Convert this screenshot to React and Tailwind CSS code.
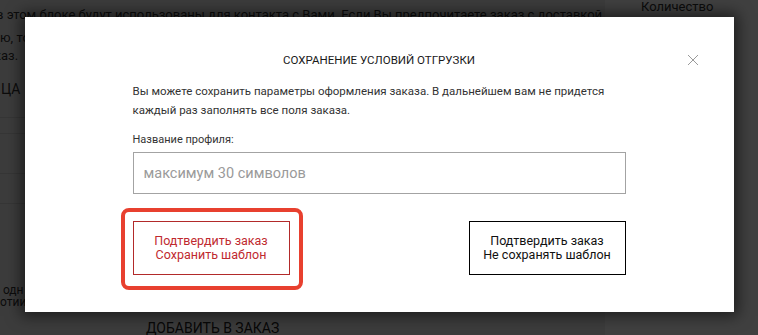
import React from 'react';

const PageBehind = () => (
    <div className="flex h-full w-full">
        <div className="flex w-[605px] flex-col bg-[#efefef] text-[13px] text-[#333]">
            <div className="h-[117px] pt-[6px] leading-[18px]">
                <p className="-ml-[4px] whitespace-nowrap">в этом блоке будут использованы для контакта с Вами. Если Вы предпочитаете заказ с доставкой через</p>
                <p className="mt-[5px] whitespace-nowrap">ю, то укажите это в комментарии.</p>
                <p className="-ml-[6px] whitespace-nowrap">каз.</p>
                <p className="ml-[1px] mt-[15px] text-[14px] whitespace-nowrap">ЦА</p>
            </div>
            <div className="h-[16px] border-t border-[#d6d6d6]" />
            <div className="h-[40px] border-t border-[#d6d6d6]" />
            <div className="h-[30px] border-t border-[#d6d6d6]" />
            <div className="flex-1 border-t border-[#d6d6d6] pt-[80px] text-[12px] leading-[12px]">
                <p className="-ml-[3px] whitespace-nowrap">ı одн</p>
                <p className="whitespace-nowrap">отии</p>
                <p className="ml-[146px] mt-[14px] text-[14px] text-[#222]">ДОБАВИТЬ В ЗАКАЗ</p>
            </div>
        </div>
        <div className="flex-1 bg-white pl-[36px] pt-[1px] text-[13px] leading-[12px] text-[#333]">
            <p>Количество</p>
        </div>
    </div>
);

const SaveTermsModal = () => (
    <div className="relative h-[295px] w-[709px] bg-white px-[108px] pt-[35px] shadow-[0_0_14px_4px_rgba(0,0,0,0.55)]">
        <button className="absolute right-[35px] top-[37px] flex h-[12px] w-[12px] items-center justify-center">
            <svg width="12" height="12" viewBox="0 0 12 12" fill="none" stroke="#9a9a9a" strokeWidth="1">
                <path d="M1 1L11 11M11 1L1 11" />
            </svg>
        </button>
        <h2 className="text-center text-[11.5px] leading-[16px] text-[#1a1a1a]">СОХРАНЕНИЕ УСЛОВИЙ ОТГРУЗКИ</h2>
        <p className="mt-[14px] text-[11.5px] leading-[19px] text-[#333]">
            Вы можете сохранить параметры оформления заказа. В дальнейшем вам не придется каждый раз заполнять все поля заказа.
        </p>
        <label className="mt-[12px] block text-[11px] leading-[16px] text-[#333]">Название профиля:</label>
        <input
            className="mt-[4px] block h-[42px] w-full border border-[#a3a3a3] px-[10px] text-[14.5px] text-[#333] outline-none placeholder:text-[#9a9a9a]"
            placeholder="максимум 30 символов"
        />
        <div className="mt-[27px] flex justify-between">
            <div className="relative">
                <div className="absolute -bottom-[15px] -left-[12px] -right-[13px] -top-[13px] rounded-[8px] border-[4px] border-[#e8402f]" />
                <button className="relative flex h-[54px] w-[157px] flex-col items-center justify-center border border-[#b22a2a] text-[12.5px] leading-[14px] text-[#bf2a2f]">
                    <span>Подтвердить заказ</span>
                    <span>Сохранить шаблон</span>
                </button>
            </div>
            <button className="flex h-[54px] w-[157px] flex-col items-center justify-center border border-black text-[12.5px] leading-[14px] text-[#111]">
                <span>Подтвердить заказ</span>
                <span>Не сохранять шаблон</span>
            </button>
        </div>
    </div>
);

export default function App() {
    return (
        <div className="relative h-[335px] w-[758px] overflow-hidden font-['Roboto',sans-serif]">
            <PageBehind />
            <div className="absolute inset-0 flex items-start justify-center bg-black/75 pt-[17px]">
                <SaveTermsModal />
            </div>
        </div>
    );
}
